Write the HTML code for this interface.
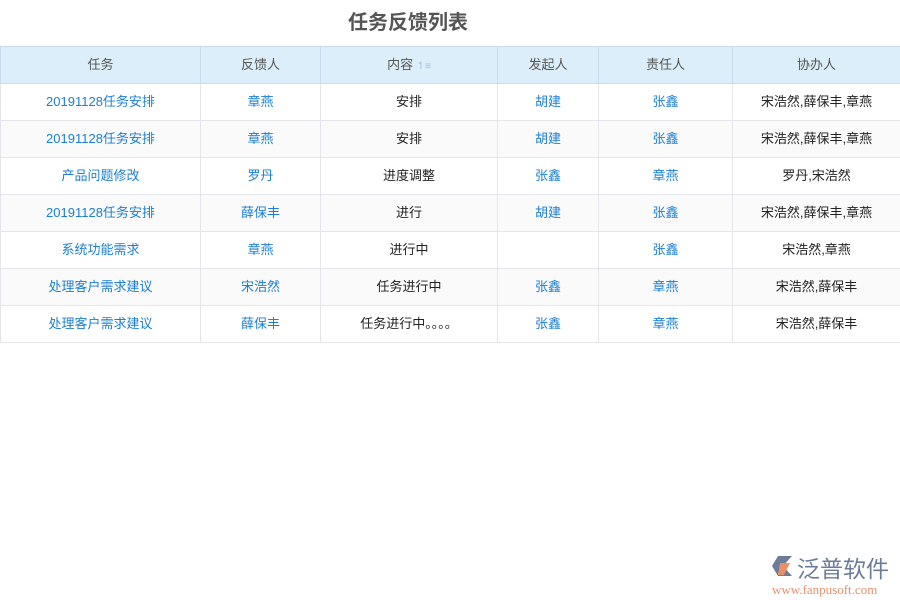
<!DOCTYPE html>
<html><head><meta charset="utf-8"><style>
body{margin:0;width:900px;height:600px;background:#fff;font-family:"Liberation Sans","Noto Sans CJK SC",sans-serif;position:relative;overflow:hidden}
h1{position:absolute;left:0;width:816px;top:6px;margin:0;text-align:center;font-size:20px;font-weight:bold;color:#555}
table{position:absolute;top:46px;left:0;width:901px;border-collapse:collapse;font-size:13px}
td,th{height:33px;padding:0 0 3px 0;border:1px solid #e3e6ea;text-align:center;color:#222;font-weight:normal}
th{background:#ddeefb;color:#555;border-color:#c9dcee}
thead tr{border-top:1px solid #7bb5e4}
tbody tr:nth-child(even) td{background:#fafafa}
.b{color:#1b7ed6}
.logo{position:absolute;left:770px;top:553px}
</style></head><body>
<h1>任务反馈列表</h1>
<table>
<colgroup><col style="width:200px"><col style="width:120px"><col style="width:177px"><col style="width:101px"><col style="width:134px"><col></colgroup>
<thead><tr><th>任务</th><th>反馈人</th><th>内容 <span style="color:#9bbfe0;font-size:10px">↿≡</span></th><th>发起人</th><th>责任人</th><th>协办人</th></tr></thead>
<tbody>
<tr><td class="b">20191128任务安排</td><td class="b">章燕</td><td>安排</td><td class="b">胡建</td><td class="b">张鑫</td><td>宋浩然,薛保丰,章燕</td></tr>
<tr><td class="b">20191128任务安排</td><td class="b">章燕</td><td>安排</td><td class="b">胡建</td><td class="b">张鑫</td><td>宋浩然,薛保丰,章燕</td></tr>
<tr><td class="b">产品问题修改</td><td class="b">罗丹</td><td>进度调整</td><td class="b">张鑫</td><td class="b">章燕</td><td>罗丹,宋浩然</td></tr>
<tr><td class="b">20191128任务安排</td><td class="b">薛保丰</td><td>进行</td><td class="b">胡建</td><td class="b">张鑫</td><td>宋浩然,薛保丰,章燕</td></tr>
<tr><td class="b">系统功能需求</td><td class="b">章燕</td><td>进行中</td><td></td><td class="b">张鑫</td><td>宋浩然,章燕</td></tr>
<tr><td class="b">处理客户需求建议</td><td class="b">宋浩然</td><td>任务进行中</td><td class="b">张鑫</td><td class="b">章燕</td><td>宋浩然,薛保丰</td></tr>
<tr><td class="b">处理客户需求建议</td><td class="b">薛保丰</td><td>任务进行中。。。。</td><td class="b">张鑫</td><td class="b">章燕</td><td>宋浩然,薛保丰</td></tr>
</tbody></table>
<div class="logo">
<svg width="26" height="24" style="position:absolute;left:0;top:2px"><path d="M8 1h14l-9 10 9 10H8L2 11z" fill="#6b7d99"/><path d="M10 8h10l-6 12H8z" fill="#e8906a"/></svg>
<div style="position:absolute;left:27px;top:-3px;font-size:23px;color:#6b7d99;white-space:nowrap;font-family:'Noto Sans CJK SC',sans-serif">泛普软件</div>
<div style="position:absolute;left:2px;top:29px;font-size:13px;color:#e8906a;font-family:'Liberation Serif',serif;white-space:nowrap">www.fanpusoft.com</div>
</div>
</body></html>
